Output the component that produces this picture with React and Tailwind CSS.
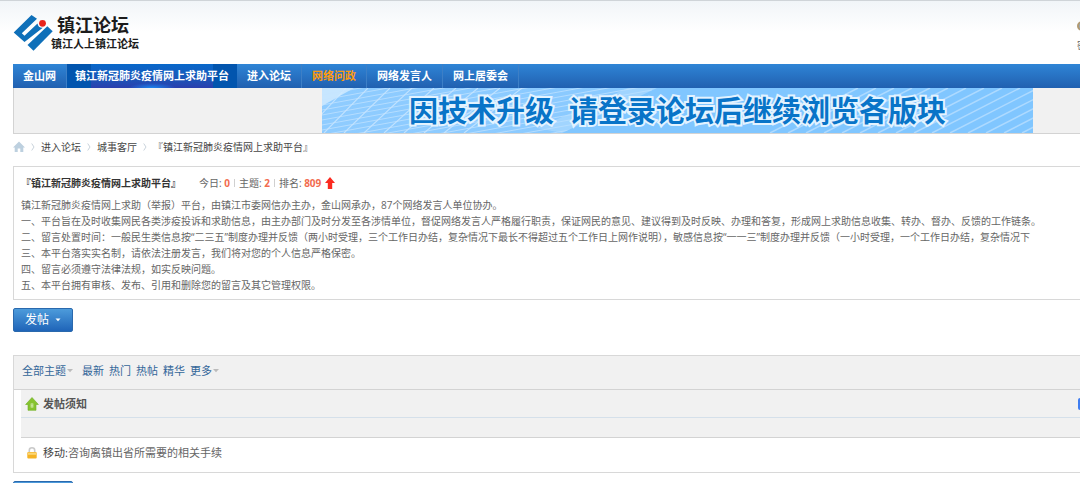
import React from 'react';

const navItems = [
  { label: '金山网' },
  { label: '镇江新冠肺炎疫情网上求助平台', active: true },
  { label: '进入论坛' },
  { label: '网络问政', highlight: true },
  { label: '网络发言人' },
  { label: '网上居委会' },
];

const description = [
  '镇江新冠肺炎疫情网上求助（举报）平台，由镇江市委网信办主办，金山网承办，87个网络发言人单位协办。',
  '一、平台旨在及时收集网民各类涉疫投诉和求助信息，由主办部门及时分发至各涉情单位，督促网络发言人严格履行职责，保证网民的意见、建议得到及时反映、办理和答复，形成网上求助信息收集、转办、督办、反馈的工作链条。',
  '二、留言处置时间：一般民生类信息按“二三五”制度办理并反馈（两小时受理，三个工作日办结，复杂情况下最长不得超过五个工作日上网作说明），敏感信息按“一一三”制度办理并反馈（一小时受理，一个工作日办结，复杂情况下',
  '三、本平台落实实名制，请依法注册发言，我们将对您的个人信息严格保密。',
  '四、留言必须遵守法律法规，如实反映问题。',
  '五、本平台拥有审核、发布、引用和删除您的留言及其它管理权限。',
];

function Logo() {
  return (
    <svg className="h-9 w-10 shrink-0" viewBox="0 0 40 36" aria-hidden="true">
      <g fill="#0f70b9">
        <path d="M0.700 17.500 L18.500 0 L24 3.800 L8.800 18.200 L11.500 20.800 L24.500 8.600 A5 5 0 0 0 29.800 12.800 L11.500 27 Z" />
        <path d="M14.500 30 L34.300 11.300 L39.700 16.200 L20.500 35.700 Z" />
      </g>
      <circle cx="29.500" cy="8.300" r="3.400" fill="#e8241c" />
    </svg>
  );
}

function HomeIcon() {
  return (
    <svg className="h-3 w-3" viewBox="0 0 12 12" fill="#bdd0df" aria-hidden="true">
      <path d="M6 0.500 L12 6.500 H10.300 V11 H7.300 V7.500 H4.700 V11 H1.700 V6.500 H0 Z" />
    </svg>
  );
}

function Separator() {
  return (
    <svg className="mx-1.5 h-2 w-1 shrink-0" viewBox="0 0 4 8" fill="none" stroke="#c9d3db" aria-hidden="true">
      <path d="M0.700 0.500 L3 4 L0.700 7.500" />
    </svg>
  );
}

function RiseArrow() {
  return (
    <svg className="ml-1 h-3 w-2.5" viewBox="0 0 10 12" aria-hidden="true">
      <path d="M5 0 L10 6 H7.200 V12 H2.800 V6 H0 Z" fill="#fb2a20" />
    </svg>
  );
}

function PinIcon() {
  return (
    <svg className="h-3.5 w-3.5" viewBox="0 0 14 14" aria-hidden="true">
      <path d="M7 0.500 L13.400 7.500 H11 V13.300 H3 V7.500 H0.600 Z" fill="#86c32f" stroke="#6fb023" strokeWidth="0.6" />
      <rect x="5.700" y="6.500" width="2.600" height="4" fill="#d9efb9" />
      <path d="M6.300 7.700 H7.700 M6.300 9.200 H7.700" stroke="#86c32f" strokeWidth="0.7" />
    </svg>
  );
}

function LockIcon() {
  return (
    <svg className="h-3 w-2.5" viewBox="0 0 10 12" aria-hidden="true">
      <path d="M2.300 6 V3.300 A2.700 2.500 0 0 1 7.700 3.300 V6" fill="none" stroke="#c9c9c9" strokeWidth="1.6" />
      <rect x="0.300" y="5" width="9.400" height="6.500" rx="1" fill="#f5b324" />
      <rect x="1" y="5.600" width="8" height="2.200" fill="#fbd675" />
    </svg>
  );
}

function Caret() {
  return (
    <svg className="ml-px h-1 w-1.5" viewBox="0 0 6 4" fill="#bbbbbb" aria-hidden="true">
      <path d="M0 0 H6 L3 3.200 Z" />
    </svg>
  );
}

function BannerPattern() {
  const steep = Array.from({ length: 9 }, (_, i) => i);
  const shallow = Array.from({ length: 24 }, (_, i) => i);
  const right = Array.from({ length: 16 }, (_, i) => i);
  return (
    <svg className="absolute inset-0 h-full w-full" viewBox="0 0 711 45" preserveAspectRatio="none" aria-hidden="true">
      <defs>
        <linearGradient id="sky" x1="0" x2="1">
          <stop offset="0" stopColor="#8fccff" />
          <stop offset="0.500" stopColor="#88c9ff" />
          <stop offset="1" stopColor="#7bc4ff" />
        </linearGradient>
      </defs>
      <rect width="711" height="45" fill="url(#sky)" />
      <path d="M0 0 H32 L0 18 Z" fill="#d5ecff" opacity="0.8" />
      <g stroke="#d3ebff" strokeWidth="1.100" opacity="0.75">
        {steep.map((i) => (
          <path key={i} d={`M${i * 20 - 18} 45 L${i * 22 + 24} 0`} />
        ))}
      </g>
      <g stroke="#c6e5ff" strokeWidth="1" opacity="0.7">
        {shallow.map((i) => (
          <path key={i} d={`M0 ${i * 5 + 2} L330 ${i * 5 - 58}`} />
        ))}
      </g>
      <path d="M240 45 L335 0 H711 V45 Z" fill="#80c6ff" />
      <path d="M240 45 L335 0 H306 L215 40 Z" fill="#b8dfff" opacity="0.5" />
      <g stroke="#b9dfff" strokeWidth="1.500" opacity="0.8">
        {right.map((i) => (
          <path key={i} d={`M${448 + i * 18} 45 L${536 + i * 18} 0`} />
        ))}
      </g>
    </svg>
  );
}

function PostButton() {
  return (
    <button
      type="button"
      className="flex h-6 w-[60px] items-center justify-center gap-1.5 rounded-xs border border-[#2a69ad] bg-gradient-to-b from-[#4d9bdb] to-[#1f64b8] text-xs leading-4 text-white"
    >
      发帖
      <svg className="h-1 w-1.5" viewBox="0 0 6 4" fill="#ffffff" aria-hidden="true">
        <path d="M0.500 0.500 H5.500 L3 3.300 Z" />
      </svg>
    </button>
  );
}

export default function App() {
  return (
    <div className="h-screen overflow-hidden border-t border-[#cfd4d8] bg-white font-['Open_Sans','Noto_Sans_CJK_SC',sans-serif] text-[10px] leading-4 text-[#666666]">
      <header className="flex h-[63px] items-start justify-between bg-gradient-to-b from-[#f1f5f8] to-white to-50%">
        <a href="#home" className="flex pl-[13px] pt-3.5 font-bold text-[#1c1c1c]">
          <Logo />
          <span className="-ml-0.5 flex flex-col">
            <span className="pl-1.5 text-[18px] leading-5">镇江论坛</span>
            <span className="pt-px text-[11px] leading-4">镇江人上镇江论坛</span>
          </span>
        </a>
        <div className="w-[3px] overflow-hidden whitespace-nowrap pt-5">
          <svg className="h-2.5 w-3" viewBox="0 0 12 10" aria-hidden="true">
            <circle cx="5" cy="5" r="4" fill="#9aa8b4" stroke="#b19a72" strokeWidth="2" />
          </svg>
          <div className="pt-1.5">密码</div>
        </div>
      </header>

      <div className="pl-[13px]">
        <nav className="flex h-6 bg-gradient-to-b from-[#2f85d6] to-[#2160b0] text-[11px] font-bold leading-6 text-white">
          {navItems.map((item) => (
            <a
              key={item.label}
              href="#nav"
              className={
                item.active
                  ? 'whitespace-nowrap bg-[radial-gradient(ellipse_24px_5px_at_50%_100%,#1c86f0,transparent),linear-gradient(90deg,#0255ae_0_24px,transparent_24px_calc(100%-24px),#0255ae_calc(100%-24px)),linear-gradient(#0868ca,#1b56b8_60%,#2b3fae)] px-2'
                  : item.highlight
                    ? 'whitespace-nowrap border-r border-[#3d7fc6] px-2.5 text-[#ff9b0c]'
                    : 'whitespace-nowrap border-r border-[#3d7fc6] px-2.5'
              }
            >
              {item.label}
            </a>
          ))}
        </nav>

        <div className="flex h-[46px] border-b border-l border-[#d3d3d3] bg-[#f1f1f1] pl-[308px]">
          <div className="relative flex w-full max-w-[711px] items-center justify-center overflow-hidden">
            <BannerPattern />
            <p className="relative whitespace-nowrap text-[29px] font-bold leading-10 text-[#0874c8] [-webkit-text-stroke:4px_#e3f3ff] [paint-order:stroke_fill]">
              因技术升级&nbsp;&nbsp;请登录论坛后继续浏览各版块
            </p>
          </div>
        </div>

        <nav className="flex h-[25px] items-center text-[#444444]">
          <a href="#home" aria-label="首页"><HomeIcon /></a>
          <Separator />
          <a href="#forum">进入论坛</a>
          <Separator />
          <a href="#city">城事客厅</a>
          <Separator />
          <a href="#board">『镇江新冠肺炎疫情网上求助平台』</a>
        </nav>

        <section className="mt-[7px] h-[134px] border border-r-0 border-[#d8d8d8] pl-[7px] pt-2">
          <div className="flex items-center whitespace-nowrap">
            <h1 className="mr-[18px] font-bold text-[#333333]">『镇江新冠肺炎疫情网上求助平台』</h1>
            <p className="flex items-center gap-1">
              <span>今日: <b className="text-[#f26c4f]">0</b></span>
              <i className="h-2 w-px bg-[#d0d0d0]" />
              <span>主题: <b className="text-[#f26c4f]">2</b></span>
              <i className="h-2 w-px bg-[#d0d0d0]" />
              <span>排名: <b className="text-[#f26c4f]">809</b></span>
            </p>
            <RiseArrow />
          </div>
          <div className="overflow-hidden whitespace-nowrap pt-1.5">
            {description.map((line) => (
              <p key={line}>{line}</p>
            ))}
          </div>
        </section>

        <div className="pt-2">
          <PostButton />
        </div>

        <section className="mt-[23px] border border-r-0 border-[#d8d8d8]">
          <div className="flex h-[34px] items-center gap-[5px] border-b border-[#d3d3d3] bg-[#f1f1f1] pb-1 pl-2 text-[11px] text-[#336699]">
            <a href="#all" className="mr-1 flex items-center">全部主题<Caret /></a>
            <a href="#latest">最新</a>
            <a href="#hot">热门</a>
            <a href="#hot-posts">热帖</a>
            <a href="#digest">精华</a>
            <a href="#more" className="flex items-center">更多<Caret /></a>
          </div>
          <div className="pl-[7px]">
            <div className="flex h-7 items-center justify-between border-b border-[#d5e0ea] bg-[#f1f1f1] pl-1">
              <div className="flex items-center gap-1">
                <PinIcon />
                <h2 className="text-[11px] font-bold text-[#555555]">
                  <a href="#notice">发帖须知</a>
                </h2>
              </div>
              <span className="h-3 w-0.5 rounded-l-xs bg-[#3f7df0]" />
            </div>
            <div className="h-5 border-b border-[#d3d3d3] bg-[#f1f1f1]" />
            <div className="flex h-[34px] items-center gap-1.5 pb-1 pl-1.5 text-[11px]">
              <LockIcon />
              <p><span className="text-[#444444]">移动:</span><a href="#thread">咨询离镇出省所需要的相关手续</a></p>
            </div>
          </div>
        </section>

        <div className="pt-2">
          <PostButton />
        </div>
      </div>
    </div>
  );
}
